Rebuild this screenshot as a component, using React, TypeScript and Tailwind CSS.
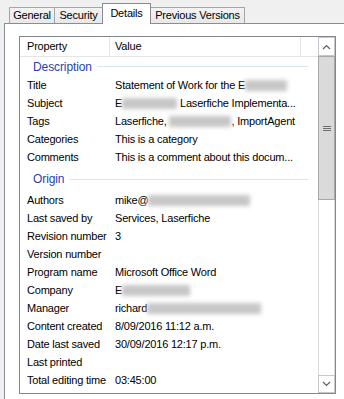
import React from 'react'

const font = { fontFamily: '"Liberation Sans", Arial, sans-serif' }

function Redact({ className }: { className: string }) {
  return (
    <span
      className={`inline-block h-[11px] align-[-2px] bg-[#c6c6c6] blur-[2px] ${className}`}
    />
  )
}

function Row({ name, children }: { name: string; children?: React.ReactNode }) {
  return (
    <div className="flex h-[18px] leading-[18px] whitespace-nowrap">
      <div className="w-[88px] shrink-0 pl-[7px]">{name}</div>
      <div className="pl-[7px]">{children}</div>
    </div>
  )
}

function Group({ title, first }: { title: string; first?: boolean }) {
  return (
    <div className={`flex items-center ${first ? 'h-[19px]' : 'h-[25px] pt-[1px]'}`}>
      <span className="pl-[13px] text-[12px] leading-[14px] text-[#2b3fae] tracking-[-0.1px]">
        {title}
      </span>
      <div className="ml-[5px] mr-[10px] h-px flex-1 bg-[#d3e6f6]" />
    </div>
  )
}

function Tab({ label, selected, className }: { label: string; selected?: boolean; className: string }) {
  if (selected) {
    return (
      <div
        className={`relative z-10 -mb-px -ml-px flex h-[21px] items-start justify-center border border-b-0 border-[#898c95] bg-white pt-[3px] leading-[13px] ${className}`}
      >
        {label}
      </div>
    )
  }
  return (
    <div
      className={`-ml-px flex h-[16px] items-center justify-center border border-b-0 border-[#a3a5ac] bg-gradient-to-b from-[#f3f3f3] to-[#e8e8e8] leading-[13px] ${className}`}
    >
      {label}
    </div>
  )
}

export default function App() {
  return (
    <div
      className="flex h-[399px] w-[344px] flex-col overflow-hidden bg-[#f0f0f0] text-[11px] tracking-[-0.2px] text-black"
      style={font}
    >
      <div className="flex h-[23px] items-end pl-[10px]">
        <Tab label="General" className="w-[46px]" />
        <Tab label="Security" className="w-[49px]" />
        <Tab label="Details" selected className="w-[49px]" />
        <Tab label="Previous Versions" className="w-[95px]" />
      </div>
      <div className="ml-[4px] flex-1 border-l border-t border-[#898c95] bg-white pl-[14px] pt-[12px]">
        <div className="flex h-[358px] w-[317px] border border-[#828790] bg-white">
          <div className="w-[298px] overflow-hidden">
            <div className="flex h-[20px] border-b border-[#e5e5e5] leading-[19px]">
              <div className="w-[90px] border-r border-[#e5e5e5] pl-[7px]">Property</div>
              <div className="w-[191px] border-r border-[#e5e5e5] pl-[5px]">Value</div>
            </div>
            <Group title="Description" first />
            <Row name="Title">
              Statement of Work for the E<Redact className="w-[42px]" />
            </Row>
            <Row name="Subject">
              E<Redact className="w-[55px]" /> Laserfiche Implementa...
            </Row>
            <Row name="Tags">
              Laserfiche, <Redact className="w-[62px]" />, ImportAgent
            </Row>
            <Row name="Categories">This is a category</Row>
            <Row name="Comments">This is a comment about this docum...</Row>
            <Group title="Origin" />
            <Row name="Authors">
              mike@<Redact className="w-[102px]" />
            </Row>
            <Row name="Last saved by">Services, Laserfiche</Row>
            <Row name="Revision number">3</Row>
            <Row name="Version number" />
            <Row name="Program name">Microsoft Office Word</Row>
            <Row name="Company">
              E<Redact className="w-[68px]" />
            </Row>
            <Row name="Manager">
              richard<Redact className="w-[114px]" />
            </Row>
            <Row name="Content created">8/09/2016 11:12 a.m.</Row>
            <Row name="Date last saved">30/09/2016 12:17 p.m.</Row>
            <Row name="Last printed" />
            <Row name="Total editing time">03:45:00</Row>
          </div>
          <div className="flex w-[17px] flex-col border-x border-[#dcdcdc] bg-white">
            <div className="-mx-px flex h-[19px] items-center justify-center border border-[#c7c7c7]">
              <svg width="9" height="6" viewBox="0 0 9 6">
                <path d="M1 5 L4.5 1.5 L8 5" fill="none" stroke="#606060" strokeWidth="1.2" />
              </svg>
            </div>
            <div className="-mx-px flex h-[144px] items-center justify-center border border-[#a8a8a8] bg-[#dadada]">
              <div className="flex w-[8px] flex-col gap-[1px]">
                <div className="h-px bg-[#6e6e6e]" />
                <div className="h-px bg-[#6e6e6e]" />
                <div className="h-px bg-[#6e6e6e]" />
              </div>
            </div>
            <div className="flex-1" />
            <div className="-mx-px flex h-[18px] items-center justify-center border border-[#c7c7c7]">
              <svg width="9" height="6" viewBox="0 0 9 6">
                <path d="M1 1 L4.5 4.5 L8 1" fill="none" stroke="#606060" strokeWidth="1.2" />
              </svg>
            </div>
          </div>
        </div>
      </div>
    </div>
  )
}
